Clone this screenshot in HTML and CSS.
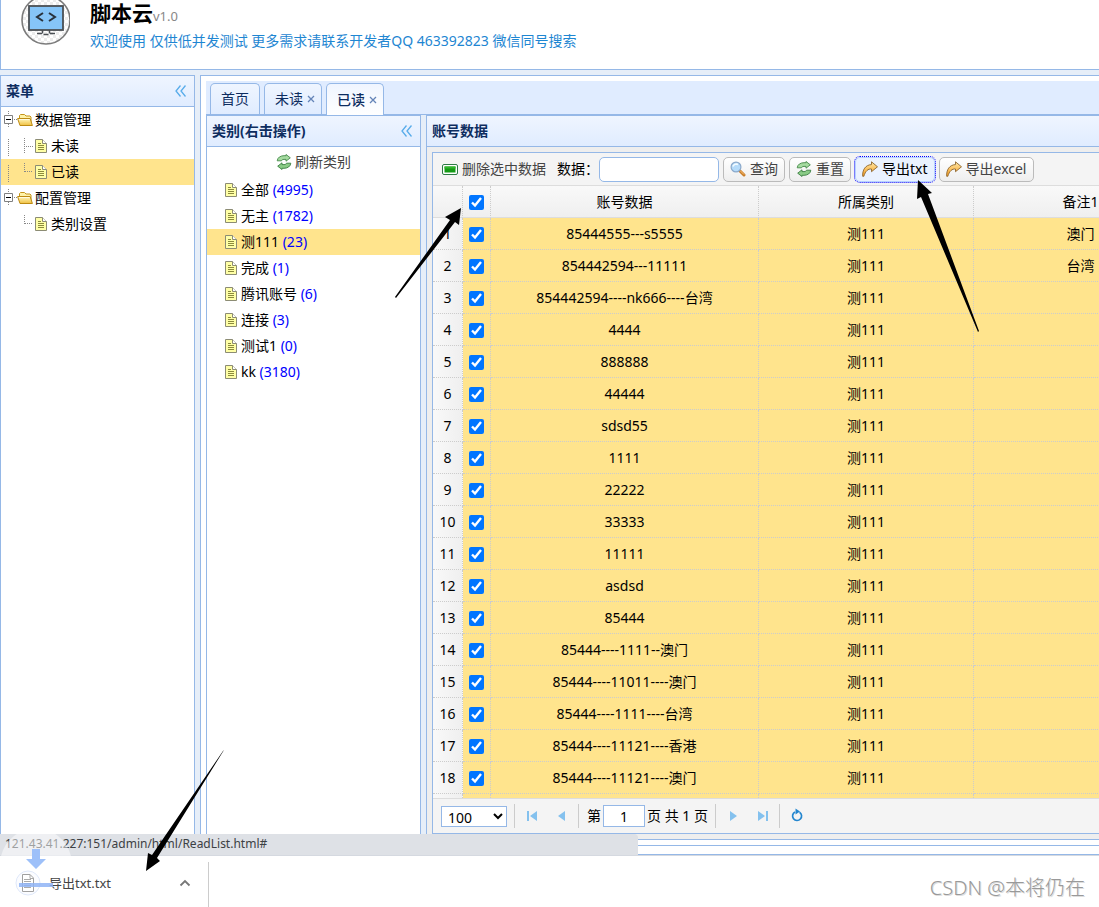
FILE: index.html
```html
<!DOCTYPE html>
<html lang="zh-CN">
<head>
<meta charset="utf-8">
<title>脚本云</title>
<link rel="stylesheet" href="styles.css">
</head>
<body>
<svg class="defs" aria-hidden="true">
  <defs>
    <linearGradient id="gold" x1="0" y1="0" x2="0" y2="1"><stop offset="0" stop-color="#fff8c0"/><stop offset="1" stop-color="#f0c040"/></linearGradient>
    <linearGradient id="orange" x1="0" y1="0" x2="0" y2="1"><stop offset="0" stop-color="#ffe9a8"/><stop offset="1" stop-color="#f59a1c"/></linearGradient>
    <symbol id="file" viewBox="0 0 12 14">
      <path d="M.5 .5h7l4 4v9H.5z" fill="#ffffa6" stroke="#8c8c74"/>
      <path d="M7.500 .5v4h4" fill="#fff" stroke="#8c8c74"/>
      <path d="M3 4.500h3M3 6.500h6M3 8.500h6M3 10.500h6" stroke="#8b8b3c"/>
    </symbol>
    <symbol id="folder" viewBox="0 0 16 14">
      <path d="M2.500 9V2.500l1-1h4l1.500 1.500h4l1 1V9" fill="#fff3a8" stroke="#c4941c"/>
      <path d="M.6 5.500h12.500l2.300 7H3z" fill="url(#gold)" stroke="#bd8a12"/>
      <path d="M2 6.500h10.500" stroke="#fffbe0"/>
    </symbol>
    <symbol id="line" viewBox="0 0 16 26"><path d="M7.500 6v17" stroke="#888" stroke-dasharray="1 1"/></symbol>
    <symbol id="tee" viewBox="0 0 16 26"><path d="M7.500 5v16M9 13.500h7" stroke="#888" stroke-dasharray="1 1"/></symbol>
    <symbol id="elbow" viewBox="0 0 16 26"><path d="M7.500 4v9M8 12.500h8" stroke="#888" stroke-dasharray="1 1"/></symbol>
    <symbol id="minus" viewBox="0 0 16 26"><path d="M7.500 4v4M7.500 17v4M13 12.500h3" stroke="#888" stroke-dasharray="1 1"/><path d="M3.500 8.500h8v8h-8z" fill="#fff" stroke="#808080"/><path d="M5 12.500h5" stroke="#000"/></symbol>
    <symbol id="reload" viewBox="0 0 16 16">
      <path d="M1.200 6.800C1.500 3.500 4.500 1.700 8 1.700h2V.5l4.300 3.300L10 7.200V5.400H8C6.500 5.400 5.700 6 5.500 6.800z" fill="#a5dba0" stroke="#45894a" stroke-width=".9"/>
      <path d="M14.800 9.200c-.3 3.300-3.300 5.100-6.800 5.100H6v1.200l-4.300-3.300L6 8.800v1.800h2c1.500 0 2.300-.6 2.500-1.400z" fill="#8acb86" stroke="#3b7f42" stroke-width=".9"/>
    </symbol>
    <symbol id="search" viewBox="0 0 16 16">
      <path d="M9.500 9.500l4.500 4.500" stroke="#c87d28" stroke-width="3" stroke-linecap="round"/>
      <path d="M10 9.500l4 4" stroke="#ffc57b"/>
      <circle cx="6" cy="6" r="4.900" fill="#b5dbfa" stroke="#8ba9cb" stroke-width="1.200"/>
      <path d="M3 5.500C3.500 3.500 6 2.500 8 3.500" stroke="#f4fbff" stroke-width="1.600" fill="none"/>
    </symbol>
    <symbol id="export" viewBox="0 0 16 16">
      <path d="M9.500 .8l6 5-6 4.900V8C6 7.700 3.500 10 1.800 15.300H.7C.2 9 3.500 3.800 9.500 3.600z" fill="url(#orange)" stroke="#8c6630" stroke-width=".9" stroke-linejoin="round"/>
    </symbol>
    <symbol id="collapse" viewBox="0 0 12 12"><path d="M5.500 .5L1 6l4.500 5.500M10.500 .5L6 6l4.500 5.500" fill="none" stroke="#58acea" stroke-width="1.300"/></symbol>
  </defs>
</svg>

<div class="app">
  <header class="banner">
    <svg class="logo" viewBox="0 4 50 46" aria-hidden="true">
      <defs><pattern id="check" width="6" height="6" patternUnits="userSpaceOnUse"><path d="M0 0h6v6H0z" fill="#fff"/><path d="M0 0h3v3H0zM3 3h3v3H3z" fill="#ececec"/></pattern></defs>
      <circle cx="26" cy="24" r="24" fill="url(#check)" stroke="#7b7b7b" stroke-width="1.600"/>
      <rect x="9" y="10" width="34" height="24" fill="#86c5f8" stroke="#4b4f54" stroke-width="1.800"/>
      <path d="M23 17l-6 4 6 4M29 17l6 4-6 4" fill="none" stroke="#29323c" stroke-width="2"/>
      <path d="M22.500 34v3.500M29.500 34v3.500M17 37.500h5M23.500 38.500h5M30 37.500h5" stroke="#4b4f54" stroke-width="1.500"/>
    </svg>
    <div class="banner-text">
      <h1>脚本云<small>v1.0</small></h1>
      <p>欢迎使用 仅供低并发测试 更多需求请联系开发者QQ 463392823 微信同号搜索</p>
    </div>
  </header>

  <div class="workspace">
    <aside class="panel menu">
      <div class="panel-head"><h2>菜单</h2><button class="fold" aria-label="折叠菜单"><svg><use href="#collapse"/></svg></button></div>
      <ul class="tree">
        <li class="node"><svg class="ind"><use href="#minus"/></svg><svg class="folder"><use href="#folder"/></svg><span>数据管理</span></li>
        <li class="node"><svg class="ind"><use href="#line"/></svg><svg class="ind"><use href="#tee"/></svg><svg class="file"><use href="#file"/></svg><span>未读</span></li>
        <li class="node selected"><svg class="ind"><use href="#line"/></svg><svg class="ind"><use href="#elbow"/></svg><svg class="file"><use href="#file"/></svg><span>已读</span></li>
        <li class="node"><svg class="ind"><use href="#minus"/></svg><svg class="folder"><use href="#folder"/></svg><span>配置管理</span></li>
        <li class="node"><span class="ind"></span><svg class="ind"><use href="#elbow"/></svg><svg class="file"><use href="#file"/></svg><span>类别设置</span></li>
      </ul>
    </aside>

    <main class="center">
      <nav class="tabs">
        <button class="tab">首页</button>
        <button class="tab">未读<svg class="close" viewBox="0 0 8 8"><path d="M1 1l6 6M7 1L1 7"/></svg></button>
        <button class="tab active">已读<svg class="close" viewBox="0 0 8 8"><path d="M1 1l6 6M7 1L1 7"/></svg></button>
      </nav>
      <div class="split">
        <section class="panel category">
          <div class="panel-head"><h2>类别(右击操作)</h2><button class="fold" aria-label="折叠类别"><svg><use href="#collapse"/></svg></button></div>
          <button class="refresh"><svg class="icon"><use href="#reload"/></svg>刷新类别</button>
          <ul class="tree cats">
            <li class="node"><svg class="file"><use href="#file"/></svg><span>全部 <b>(4995)</b></span></li>
            <li class="node"><svg class="file"><use href="#file"/></svg><span>无主 <b>(1782)</b></span></li>
            <li class="node selected"><svg class="file"><use href="#file"/></svg><span>测111 <b>(23)</b></span></li>
            <li class="node"><svg class="file"><use href="#file"/></svg><span>完成 <b>(1)</b></span></li>
            <li class="node"><svg class="file"><use href="#file"/></svg><span>腾讯账号 <b>(6)</b></span></li>
            <li class="node"><svg class="file"><use href="#file"/></svg><span>连接 <b>(3)</b></span></li>
            <li class="node"><svg class="file"><use href="#file"/></svg><span>测试1 <b>(0)</b></span></li>
            <li class="node"><svg class="file"><use href="#file"/></svg><span>kk <b>(3180)</b></span></li>
          </ul>
        </section>

        <section class="panel accounts">
          <div class="panel-head"><h2>账号数据</h2></div>
          <div class="grid">
            <div class="toolbar">
              <button class="plain"><svg class="remove" viewBox="0 0 16 11"><rect x=".5" y=".5" width="15" height="10" rx="1.500" fill="#fff" stroke="#2d7a45"/><path d="M2.500 2.500h11v6h-11z" fill="#159a15"/><path d="M2.500 2.500h11v2h-11z" fill="#31b52c"/></svg>删除选中数据</button>
              <label for="kw">数据：</label><input id="kw" class="keyword" type="text">
              <button class="btn"><svg class="icon"><use href="#search"/></svg>查询</button>
              <button class="btn"><svg class="icon"><use href="#reload"/></svg>重置</button>
              <button class="btn focused"><svg class="icon"><use href="#export"/></svg>导出txt</button>
              <button class="btn"><svg class="icon"><use href="#export"/></svg>导出excel</button>
            </div>
            <div class="view">
              <table>
                <colgroup><col class="c-num"><col class="c-check"><col class="c-data"><col class="c-cat"><col class="c-note"></colgroup>
                <thead><tr><th></th><th><input type="checkbox" aria-label="全选" checked></th><th>账号数据</th><th>所属类别</th><th>备注1</th></tr></thead>
                <tbody>
                  <tr><td>1</td><td><input type="checkbox" aria-label="1" checked></td><td>85444555---s5555</td><td>测111</td><td>澳门</td></tr>
                  <tr><td>2</td><td><input type="checkbox" aria-label="2" checked></td><td>854442594---11111</td><td>测111</td><td>台湾</td></tr>
                  <tr><td>3</td><td><input type="checkbox" aria-label="3" checked></td><td>854442594----nk666----台湾</td><td>测111</td><td></td></tr>
                  <tr><td>4</td><td><input type="checkbox" aria-label="4" checked></td><td>4444</td><td>测111</td><td></td></tr>
                  <tr><td>5</td><td><input type="checkbox" aria-label="5" checked></td><td>888888</td><td>测111</td><td></td></tr>
                  <tr><td>6</td><td><input type="checkbox" aria-label="6" checked></td><td>44444</td><td>测111</td><td></td></tr>
                  <tr><td>7</td><td><input type="checkbox" aria-label="7" checked></td><td>sdsd55</td><td>测111</td><td></td></tr>
                  <tr><td>8</td><td><input type="checkbox" aria-label="8" checked></td><td>1111</td><td>测111</td><td></td></tr>
                  <tr><td>9</td><td><input type="checkbox" aria-label="9" checked></td><td>22222</td><td>测111</td><td></td></tr>
                  <tr><td>10</td><td><input type="checkbox" aria-label="10" checked></td><td>33333</td><td>测111</td><td></td></tr>
                  <tr><td>11</td><td><input type="checkbox" aria-label="11" checked></td><td>11111</td><td>测111</td><td></td></tr>
                  <tr><td>12</td><td><input type="checkbox" aria-label="12" checked></td><td>asdsd</td><td>测111</td><td></td></tr>
                  <tr><td>13</td><td><input type="checkbox" aria-label="13" checked></td><td>85444</td><td>测111</td><td></td></tr>
                  <tr><td>14</td><td><input type="checkbox" aria-label="14" checked></td><td>85444----1111--澳门</td><td>测111</td><td></td></tr>
                  <tr><td>15</td><td><input type="checkbox" aria-label="15" checked></td><td>85444----11011----澳门</td><td>测111</td><td></td></tr>
                  <tr><td>16</td><td><input type="checkbox" aria-label="16" checked></td><td>85444----1111----台湾</td><td>测111</td><td></td></tr>
                  <tr><td>17</td><td><input type="checkbox" aria-label="17" checked></td><td>85444----11121----香港</td><td>测111</td><td></td></tr>
                  <tr><td>18</td><td><input type="checkbox" aria-label="18" checked></td><td>85444----11121----澳门</td><td>测111</td><td></td></tr>
                  <tr><td></td><td></td><td></td><td></td><td></td></tr>
                </tbody>
              </table>
            </div>
            <div class="pager">
              <select aria-label="每页条数"><option>100</option></select>
              <i class="sep"></i>
              <button class="pg" aria-label="首页"><svg viewBox="0 0 16 16"><path d="M3 3h2v10H3zM13 3v10L6 8z"/></svg></button>
              <button class="pg" aria-label="上一页"><svg viewBox="0 0 16 16"><path d="M11 3v10L4 8z"/></svg></button>
              <i class="sep"></i>
              <label for="page">第</label><input id="page" class="page" type="text" value="1"><span>页 共 1 页</span>
              <i class="sep"></i>
              <button class="pg" aria-label="下一页"><svg viewBox="0 0 16 16"><path d="M5 3v10l7-5z"/></svg></button>
              <button class="pg" aria-label="末页"><svg viewBox="0 0 16 16"><path d="M11 3h2v10h-2zM3 3v10l7-5z"/></svg></button>
              <i class="sep"></i>
              <button class="pg" aria-label="刷新"><svg viewBox="0 0 16 16"><path class="ring" d="M10.500 4.200A4.500 4.500 0 1 1 6 4"/><path class="tip" d="M6.500 .5l4.500 3-4.500 3z"/></svg></button>
            </div>
          </div>
        </section>
      </div>
    </main>
  </div>
  <div class="status">121.43.41.227:151/admin/html/ReadList.html#</div>
</div>

<footer class="shelf">
  <div class="download">
    <svg class="doc" viewBox="0 0 26 26" aria-hidden="true"><circle cx="13" cy="13" r="12" fill="#fbfcff" stroke="#dfe8fa"/><path d="M7.500 4.500h7.500l3.500 3.500v13.500h-11z" fill="#fff" stroke="#a0a0a0"/><path d="M15 4.500v4h3.500M9 9.500h7M9 11.500h7M9 13.500h7M9 15.500h7M9 17.500h7" fill="none" stroke="#aaa"/></svg>
    <span>导出txt.txt</span>
    <button class="more" aria-label="更多"><svg viewBox="0 0 12 8"><path d="M1.500 6.500L6 2l4.500 4.500"/></svg></button>
  </div>
  <div class="watermark">CSDN @本将仍在</div>
</footer>

<svg class="flying" viewBox="0 0 72 60" aria-hidden="true">
  <path d="M0 23A36 36 0 0 1 70 23z" fill="#fff" fill-opacity=".5"/>
  <path d="M31 16h8v10h6l-10 10-10-10h6z" fill="#9dc0f9"/>
  <path d="M18 50h34v4H18z" fill="#8fb4f6" fill-opacity=".85"/>
</svg>
<svg class="pointers" width="1099" height="907" aria-hidden="true">
  <path d="M395 297L396 298 455 222 459 225 461 208 445 217 450 220z"/>
  <path d="M978 332L979 331 928 194 932 193 918 180 917 199 921 197z"/>
  <path d="M224 750L223 751 152 855 148 853 146 871 160 861 157 858z"/>
</svg>
</body>
</html>
```
FILE: styles.css
```css
* { box-sizing: border-box; }
body {
  margin: 0;
  height: 100vh;
  display: flex;
  flex-direction: column;
  overflow: hidden;
  background: #fff;
  color: #000;
  font: 14px/20px "Noto Sans", "Noto Sans CJK SC", sans-serif;
}
button, input, select { font: inherit; color: inherit; margin: 0; }
button { border: 0; background: none; padding: 0; white-space: nowrap; }
h1, h2, p, ul { margin: 0; padding: 0; }
svg { display: block; flex: none; }
.defs { position: absolute; width: 0; height: 0; }

.app {
  position: relative;
  flex: 1;
  min-height: 0;
  display: flex;
  flex-direction: column;
  gap: 5px;
  padding-bottom: 8px;
  background: #e6eef8;
  border-bottom: 1px solid #95b8e7;
}
.banner {
  display: flex;
  gap: 20px;
  height: 70px;
  padding-left: 19px;
  background: #fff;
  border: solid #95b8e7;
  border-width: 0 0 1px 1px;
}
.logo { width: 50px; height: 46px; }
.banner h1 { font-size: 21px; line-height: 26px; }
.banner small { font-size: 13px; font-weight: 400; color: #888; }
.banner p { line-height: 24px; color: #1e86d2; }

.workspace { flex: 1; min-height: 0; display: flex; gap: 5px; }
.panel { border: 1px solid #95b8e7; background: #fff; }
.panel-head {
  display: flex;
  align-items: center;
  justify-content: space-between;
  height: 31px;
  padding: 0 7px 0 5px;
  border-bottom: 1px solid #95b8e7;
  background: linear-gradient(#eff5ff, #e0ecff);
}
.panel-head h2 { font-size: 14px; color: #0e2d5f; }
.fold svg { width: 12px; height: 12px; }
.menu { width: 195px; flex: none; }

.tree { list-style: none; }
.node { display: flex; align-items: center; height: 26px; white-space: nowrap; }
.node.selected { background: #ffe48d; }
.ind { width: 16px; height: 26px; }
.folder { width: 16px; height: 14px; margin-right: 2px; }
.file { width: 12px; height: 14px; margin: 0 4px 0 2px; }
.node b { font-weight: 400; color: #00f; }
.cats .node { padding-left: 16px; }

.center {
  flex: 1;
  min-width: 0;
  display: flex;
  flex-direction: column;
  padding: 5px 0 5px 5px;
  background: #fff;
  border: solid #95b8e7;
  border-width: 1px 0 1px 1px;
  box-shadow: 0 8px #fff;
}
.tabs {
  display: flex;
  align-items: flex-end;
  gap: 4px;
  height: 34px;
  padding-left: 4px;
  background: #e0ecff;
  border-bottom: 1px solid #95b8e7;
}
.tab {
  display: flex;
  align-items: center;
  gap: 4px;
  height: 31px;
  padding: 0 10px;
  border: 1px solid #95b8e7;
  border-bottom: 0;
  border-radius: 5px 5px 0 0;
  background: linear-gradient(#eff5ff, #e0ecff);
  color: #0e2d5f;
}
.tab:has(.close) { padding-right: 6px; }
.tab.active { height: 32px; margin-bottom: -1px; background: linear-gradient(#eff5ff, #fff); font-weight: 500; }
.close { width: 8px; height: 8px; stroke: #6484b8; stroke-width: 1.3; }
.split {
  flex: 1;
  min-height: 0;
  display: flex;
  gap: 5px;
  background: #e6eef8;
  border-bottom: 1px solid #95b8e7;
}
.category { width: 215px; flex: none; }
.refresh {
  display: flex;
  align-items: center;
  gap: 3px;
  height: 30px;
  margin: 0 auto;
  color: #444;
}
.icon { width: 16px; height: 16px; }

.accounts { flex: 1; min-width: 0; display: flex; flex-direction: column; border-width: 1px 0 0 1px; background: #eee; }
.accounts .panel-head { flex: none; }
.grid {
  flex: 1;
  min-height: 0;
  display: flex;
  flex-direction: column;
  margin: 5px 0 5px 5px;
  border: solid #95b8e7;
  border-width: 1px 0 1px 1px;
  background: #fff;
}
.toolbar {
  display: flex;
  flex: none;
  align-items: center;
  gap: 4px;
  height: 33px;
  padding-left: 9px;
  background: #f4f4f4;
  border-bottom: 1px solid #ddd;
}
.plain { display: flex; align-items: center; gap: 4px; margin-right: 7px; color: #444; }
.remove { width: 16px; height: 11px; }
.toolbar label { width: 38px; white-space: nowrap; }
.keyword { width: 120px; height: 25px; padding: 0 5px; border: 1px solid #95b8e7; border-radius: 5px; background: #fff; }
.btn {
  display: flex;
  align-items: center;
  gap: 4px;
  height: 25px;
  padding: 0 6px;
  border: 1px solid #bbb;
  border-radius: 5px;
  background: linear-gradient(#fff, #eee);
  color: #444;
}
.btn.focused { border-color: #b7d2ff; outline: 1px dotted #00f; background: #eaf2ff; color: #000; }

.view { flex: 1; min-height: 0; overflow: hidden; }
table { width: 755px; min-width: 100%; table-layout: fixed; border-collapse: separate; border-spacing: 0; }
.c-num { width: 30px; }
.c-check { width: 28px; }
.c-data { width: 268px; }
.c-cat { width: 215px; }
.c-note { width: 214px; }
th, td { height: 32px; padding: 0; border: dotted #ccc; border-width: 0 1px 1px 0; text-align: center; font-weight: 400; white-space: nowrap; }
th { background: linear-gradient(#f9f9f9, #efefef); border-bottom: 1px solid #ddd; }
td { background: #ffe48d; }
td:first-child { background: linear-gradient(90deg, #f9f9f9, #efefef); }
th:nth-child(2), td:nth-child(2) { padding-top: 1px; }
input[type="checkbox"] { display: block; width: 15px; height: 15px; margin: 0 auto; accent-color: #0075ff; }

.pager { display: flex; flex: none; align-items: center; height: 35px; padding-left: 8px; background: #f4f4f4; border-top: 1px solid #ddd; }
.pager select { width: 66px; height: 21px; padding: 0 2px; border: 1px solid #95b8e7; border-radius: 0; background: #fff; line-height: 18px; }
.sep { width: 1px; height: 24px; margin: 0 8px 0 7px; background: #ccc; }
.sep + .pg { margin-left: 1px; }
.pg { padding: 0; margin-right: 14px; }
.pg + .sep { margin-left: -6px; }
.pg svg { width: 16px; height: 16px; fill: #84c1ee; }
.pg .ring { fill: none; stroke: #2386cf; stroke-width: 1.7; }
.pg .tip { fill: #2386cf; }
.page { width: 42px; height: 22px; margin: 0 2px; padding: 0; border: 1px solid #95b8e7; background: #fff; text-align: center; }

.status {
  position: absolute;
  left: 0;
  bottom: -1px;
  width: 638px;
  height: 21px;
  padding-left: 5px;
  border-radius: 0 4px 0 0;
  background: #dee1e6;
  color: #3c4043;
  font-size: 12px;
  line-height: 20px;
}
.shelf { display: flex; flex: none; justify-content: space-between; height: 52px; padding-top: 6px; border-top: 1px solid #d5d9e0; }
.download {
  display: flex;
  align-items: center;
  width: 209px;
  padding: 0 17px 3px 15px;
  border-right: 1px solid #ccc;
  color: #444;
  font-size: 13px;
}
.doc { width: 26px; height: 26px; margin-right: 8px; }
.more { margin-left: auto; }
.more svg { width: 12px; height: 8px; fill: none; stroke: #777; stroke-width: 1.8; }
.watermark { padding: 12px 14px 0 0; color: #999; font-size: 20px; font-weight: 300; line-height: 28px; text-shadow: 1px 1px 0 #ddd; }

.flying { position: absolute; left: 1px; top: 833px; width: 72px; height: 60px; }
.pointers { position: absolute; left: 0; top: 0; pointer-events: none; }
```
